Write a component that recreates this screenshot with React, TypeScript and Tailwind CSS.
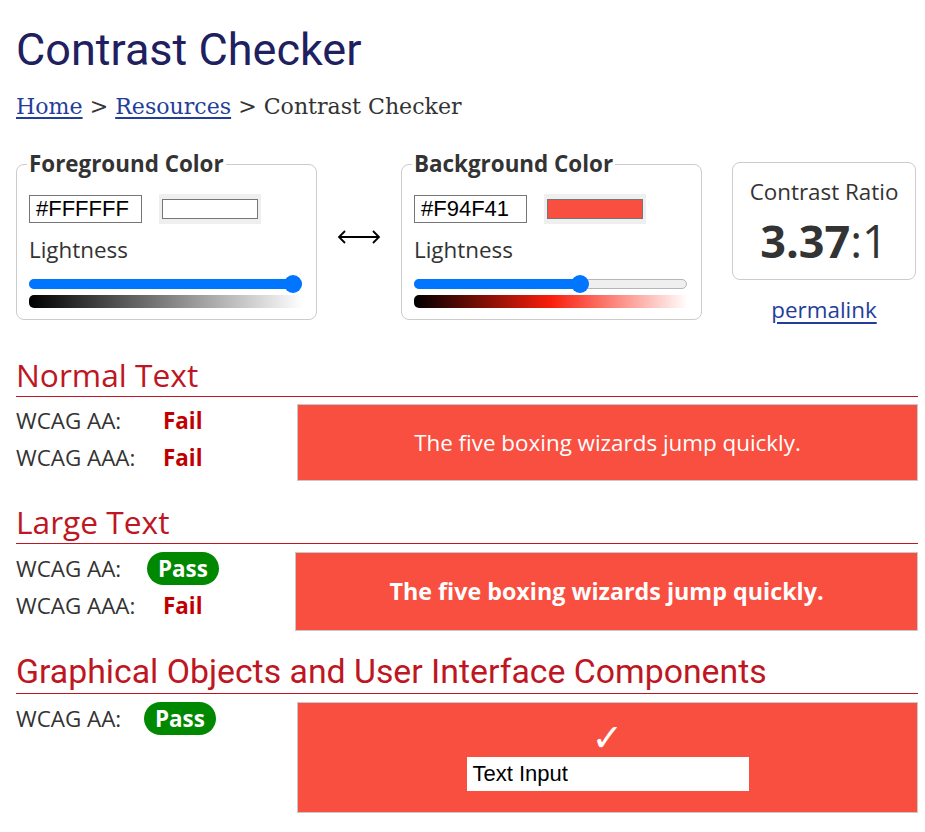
import React from "react";

const OS = { fontFamily: '"Open Sans", sans-serif' } as const;

function Legend({ children }: { children: React.ReactNode }) {
  return (
    <div className="-mt-[16px] h-[30px]">
      <span className="-ml-[2px] inline-block bg-white px-[2px] text-[22.4px] font-bold leading-[30px] text-[#333]">
        {children}
      </span>
    </div>
  );
}

function Slider({ value }: { value: number }) {
  const r = 9;
  return (
    <div className="relative mt-[8px] h-[20px] w-[273px]">
      <div className="absolute left-0 right-0 top-[6px] h-[10px] rounded-full border border-[#b5b5b5] bg-[#efefef]" />
      <div
        className="absolute left-0 top-[6px] h-[10px] rounded-full bg-[#0075ff]"
        style={{ width: `${r + (273 - 2 * r) * value + 2}px` }}
      />
      <div
        className="absolute top-[2px] h-[18px] w-[18px] rounded-full bg-[#0075ff]"
        style={{ left: `${(273 - 2 * r) * value}px` }}
      />
    </div>
  );
}

function ColorBox({
  title,
  hex,
  swatch,
  value,
  gradient,
}: {
  title: string;
  hex: string;
  swatch: string;
  value: number;
  gradient: string;
}) {
  return (
    <div className="mt-[15px] w-[301px] rounded-[8px] border border-[#cccccc] pb-[11px] pl-[12px]">
      <Legend>{title}</Legend>
      <div className="mt-[15px] flex items-center">
        <div
          className="h-[28px] w-[113px] border border-[#767676] pl-[6px] text-[22px] leading-[26px] text-black"
          style={{ fontFamily: '"Liberation Sans", Arial, sans-serif' }}
        >
          {hex}
        </div>
        <div className="ml-[17px] flex h-[30px] w-[102px] items-center justify-center bg-[#efefef]">
          <div className={`h-[20px] w-[96px] border border-[#767676] ${swatch}`} />
        </div>
      </div>
      <div className="mt-[11px] text-[22.4px] leading-[30px] text-[#333]">Lightness</div>
      <Slider value={value} />
      <div className={`mt-[2px] h-[13px] w-[274px] rounded-l-[5px] ${gradient}`} />
    </div>
  );
}

function Row({
  label,
  status,
  labelW,
}: {
  label: string;
  status: "Pass" | "Fail";
  labelW: string;
}) {
  return (
    <div className="flex h-[37px] items-center">
      <div className={`${labelW} text-[22.4px] text-[#333]`}>{label}</div>
      {status === "Pass" ? (
        <span className="rounded-full bg-[#008800] px-[11px] text-[22.4px] font-bold leading-[33px] text-white">
          Pass
        </span>
      ) : (
        <span className="pl-[16px] text-[22.4px] font-bold text-[#c00000]">Fail</span>
      )}
    </div>
  );
}

function Heading({ children, roboto }: { children: React.ReactNode; roboto?: boolean }) {
  return (
    <h2
      className={`border-b border-[#be1622] text-[#be1622] ${
        roboto ? "text-[33.8px] leading-[43px]" : "text-[31.7px] leading-[42px]"
      }`}
      style={roboto ? { fontFamily: "Roboto, sans-serif" } : undefined}
    >
      {children}
    </h2>
  );
}

export default function App() {
  return (
    <div className="min-h-[832px] w-[925px] bg-white pl-[16px]" style={OS}>
      <div className="w-[902px]">
        <h1
          className="pt-[23px] text-[45px] font-normal leading-[54px] text-[#202060]"
          style={{ fontFamily: "Roboto, sans-serif" }}
        >
          Contrast Checker
        </h1>
        <div
          className="mt-[14px] text-[22.1px] leading-[30px] text-[#333]"
          style={{ fontFamily: '"DejaVu Serif", serif' }}
        >
          <a className="text-[#233e99] underline underline-offset-[3px]">Home</a> &gt;{" "}
          <a className="text-[#233e99] underline underline-offset-[3px]">Resources</a> &gt; Contrast Checker
        </div>

        <div className="mt-[28px] flex items-start">
          <ColorBox
            title="Foreground Color"
            hex="#FFFFFF"
            swatch="bg-white"
            value={1}
            gradient="bg-[linear-gradient(to_right,#000000,#ffffff)]"
          />
          <div className="flex w-[84px] justify-center pt-[80px]">
            <svg width="44" height="16" viewBox="0 0 44 16" fill="none" stroke="#000" strokeWidth="1.8">
              <path d="M2 8 H42" />
              <path d="M8 2 L2 8 L8 14" strokeLinejoin="miter" />
              <path d="M36 2 L42 8 L36 14" strokeLinejoin="miter" />
            </svg>
          </div>
          <ColorBox
            title="Background Color"
            hex="#F94F41"
            swatch="bg-[#f94f41]"
            value={0.616}
            gradient="bg-[linear-gradient(to_right,#000000,#f91e0c,#ffffff)]"
          />
          <div className="ml-[30px] mt-[13px] flex w-[184px] flex-col items-center">
            <div className="flex h-[118px] w-[184px] flex-col items-center rounded-[8px] border border-[#cccccc] pt-[14px]">
              <div className="text-[22.4px] leading-[30px] text-[#333]">Contrast Ratio</div>
              <div className="mt-[4px] text-[45px] leading-[60px] text-[#333]">
                <span className="font-bold">3.37</span>:1
              </div>
            </div>
            <a className="mt-[15px] text-[22.4px] leading-[30px] text-[#233e99] underline underline-offset-[4px]">
              permalink
            </a>
          </div>
        </div>

        <div className="mt-[29px]">
          <Heading>Normal Text</Heading>
          <div className="mt-[5px] flex items-start">
            <div className="w-[281px]">
              <Row label="WCAG AA:" status="Fail" labelW="w-[131px]" />
              <Row label="WCAG AAA:" status="Fail" labelW="w-[131px]" />
            </div>
            <div className="mt-[2px] flex h-[77px] flex-1 items-center justify-center border border-[#c8c8c8] bg-[#f94f41] text-[22.4px] text-white">
              The five boxing wizards jump quickly.
            </div>
          </div>
        </div>

        <div className="mt-[20px]">
          <Heading>Large Text</Heading>
          <div className="mt-[6px] flex items-start">
            <div className="w-[279px]">
              <Row label="WCAG AA:" status="Pass" labelW="w-[131px]" />
              <Row label="WCAG AAA:" status="Fail" labelW="w-[131px]" />
            </div>
            <div className="mt-[2px] flex h-[79px] flex-1 items-center justify-center border border-[#c8c8c8] bg-[#f94f41] text-[23.3px] font-bold text-white">
              The five boxing wizards jump quickly.
            </div>
          </div>
        </div>

        <div className="mt-[19px]">
          <Heading roboto>Graphical Objects and User Interface Components</Heading>
          <div className="mt-[6px] flex items-start">
            <div className="w-[281px]">
              <Row label="WCAG AA:" status="Pass" labelW="w-[128px]" />
            </div>
            <div className="mt-[2px] flex h-[111px] flex-1 flex-col items-center border border-[#c8c8c8] bg-[#f94f41] pt-[20px]">
              <div
                className="h-[30px] text-[38px] leading-[30px] text-white"
                style={{ fontFamily: '"DejaVu Sans", sans-serif' }}
              >
                ✓
              </div>
              <div
                className="mt-[4px] h-[34px] w-[282px] bg-white pl-[6px] text-[22px] leading-[34px] text-black"
                style={{ fontFamily: '"Liberation Sans", Arial, sans-serif' }}
              >
                Text Input
              </div>
            </div>
          </div>
        </div>
      </div>
    </div>
  );
}
